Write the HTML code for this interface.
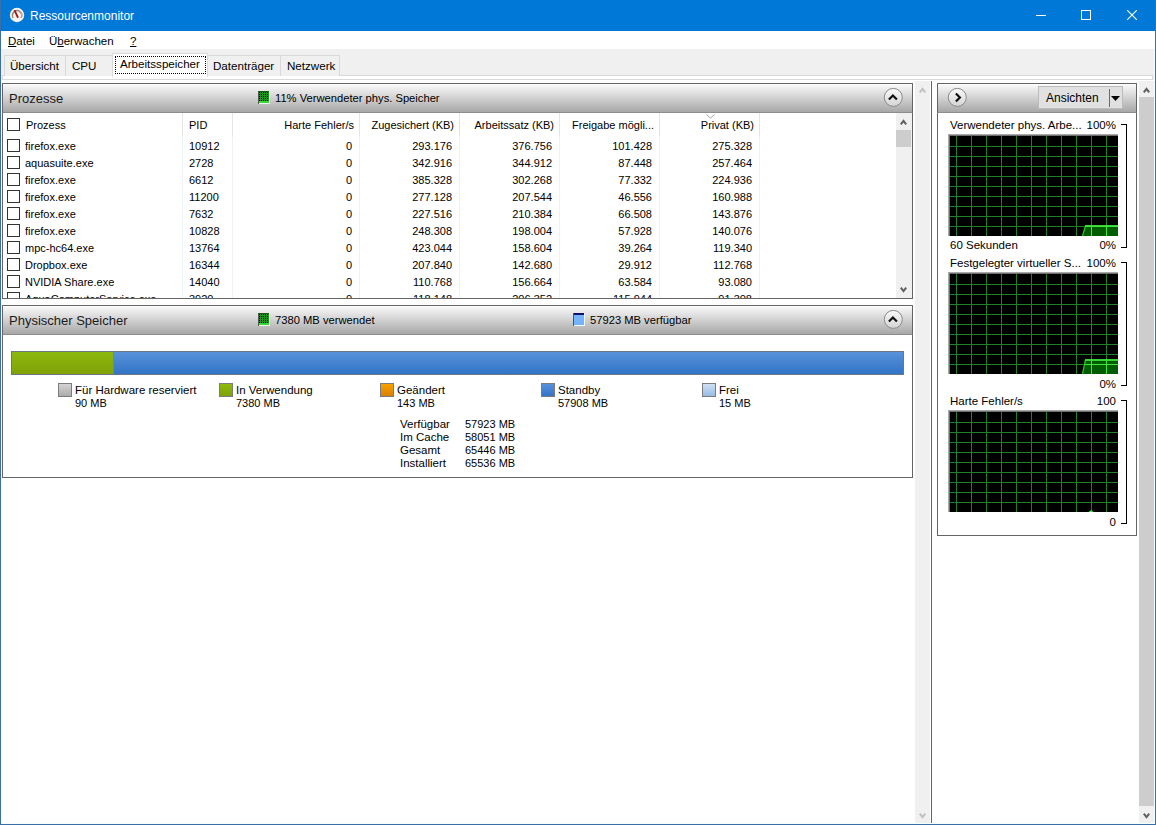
<!DOCTYPE html>
<html><head><meta charset="utf-8"><style>
*{margin:0;padding:0;box-sizing:border-box}
html,body{width:1156px;height:825px;overflow:hidden;background:#fff}
body{font-family:"Liberation Sans",sans-serif;font-size:11.5px;line-height:13px;color:#000;position:relative}
.a{position:absolute;white-space:nowrap}
.u{text-decoration:underline;text-underline-offset:1px}
.hdr{background:linear-gradient(#fff 0,#fff 1px,#f8f8f8 1px,#a7a7a7 100%)}
.cb{position:absolute;width:13px;height:13px;border:1px solid #333;background:#fff}
.gi{position:absolute;width:12px;height:13px;background:#000}
</style></head><body>
<div class="a" style="left:0px;top:0px;width:1156px;height:825px;background:#f0f0f0;border:1px solid #3a6ea6"></div>
<div class="a" style="left:0px;top:0px;width:1156px;height:31px;background:#0078d7"></div>
<svg class="a" style="left:8px;top:6px" width="18" height="18" viewBox="0 0 18 18">
<circle cx="9" cy="9" r="7.2" fill="#f6f3f0"/>
<path d="M5.2 11.8 A4.6 4.6 0 1 1 13 11.8" fill="none" stroke="#8f8a80" stroke-width="1.4"/>
<path d="M12.6 6.2 A4.6 4.6 0 0 1 13 11.8" fill="none" stroke="#d9a070" stroke-width="1.4"/>
<path d="M5.6 4.3 L7.4 3.9 L10.8 11.2 L9.2 12.2 Z" fill="#a8101a"/>
</svg>
<div class="a" style="left:30px;top:10px;font-size:12px;color:#fff">Ressourcenmonitor</div>
<svg class="a" style="left:1036px;top:15px" width="11" height="1"><rect width="10" height="1" fill="#fff"/></svg>
<svg class="a" style="left:1081px;top:10px" width="10" height="10"><rect x="0.5" y="0.5" width="9" height="9" fill="none" stroke="#fff"/></svg>
<svg class="a" style="left:1127px;top:10px" width="10" height="10"><path d="M0 0L10 10M10 0L0 10" stroke="#fff" stroke-width="1.1"/></svg>
<div class="a" style="left:1px;top:31px;width:1154px;height:18px;background:#fff"></div>
<div class="a" style="left:8px;top:35px"><span class="u">D</span>atei</div>
<div class="a" style="left:49px;top:35px">Ü<span class="u">b</span>erwachen</div>
<div class="a" style="left:130px;top:35px"><span class="u">?</span></div>
<div class="a" style="left:2px;top:75px;width:1151px;height:5px;background:#fff;border:1px solid #d9d9d9"></div>
<div class="a" style="left:4px;top:55px;width:62px;height:21px;background:#f0f0f0;border:1px solid #d9d9d9;border-bottom:none"></div>
<div class="a" style="left:10px;top:59px;font-size:11.6px">Übersicht</div>
<div class="a" style="left:65px;top:55px;width:48px;height:21px;background:#f0f0f0;border:1px solid #d9d9d9;border-bottom:none"></div>
<div class="a" style="left:72px;top:59px;font-size:11.6px">CPU</div>
<div class="a" style="left:207px;top:55px;width:74px;height:21px;background:#f0f0f0;border:1px solid #d9d9d9;border-bottom:none"></div>
<div class="a" style="left:213px;top:59px;font-size:11.6px">Datenträger</div>
<div class="a" style="left:280px;top:55px;width:60px;height:21px;background:#f0f0f0;border:1px solid #d9d9d9;border-bottom:none"></div>
<div class="a" style="left:287px;top:59px;font-size:11.6px">Netzwerk</div>
<div class="a" style="left:112px;top:53px;width:96px;height:24px;background:#fff;border:1px solid #d9d9d9;border-bottom:none"></div>
<div class="a" style="left:115px;top:56px;width:91px;height:18px;border:1px dotted #000"></div>
<div class="a" style="left:120px;top:57px;font-size:11.6px">Arbeitsspeicher</div>
<div class="a" style="left:1px;top:80px;width:1154px;height:744px;background:#fff"></div>
<div class="a" style="left:2px;top:83px;width:911px;height:30px;border:1px solid #646464;border-bottom:1px solid #8c8c8c;border-radius:1px 1px 0 0"></div>
<div class="a hdr" style="left:3px;top:84px;width:909px;height:28px"></div>
<div class="a" style="left:9px;top:92px;font-size:13px;color:#1a1a1a">Prozesse</div>
<svg class="a" style="left:258px;top:91px" width="12" height="13" viewBox="0 0 12 13">
<rect x="0" y="0" width="12" height="13" fill="#e8f8e8"/>
<rect x="0" y="0" width="11" height="12" fill="#169a16"/>
<rect x="1" y="1" width="1" height="1" fill="#000"/><rect x="1" y="3" width="1" height="1" fill="#000"/><rect x="1" y="5" width="1" height="1" fill="#000"/><rect x="1" y="7" width="1" height="1" fill="#000"/><rect x="1" y="9" width="1" height="1" fill="#000"/><rect x="3" y="1" width="1" height="1" fill="#000"/><rect x="3" y="3" width="1" height="1" fill="#000"/><rect x="3" y="5" width="1" height="1" fill="#000"/><rect x="3" y="7" width="1" height="1" fill="#000"/><rect x="3" y="9" width="1" height="1" fill="#000"/><rect x="5" y="1" width="1" height="1" fill="#000"/><rect x="5" y="3" width="1" height="1" fill="#000"/><rect x="5" y="5" width="1" height="1" fill="#000"/><rect x="5" y="7" width="1" height="1" fill="#000"/><rect x="5" y="9" width="1" height="1" fill="#000"/><rect x="7" y="1" width="1" height="1" fill="#000"/><rect x="7" y="3" width="1" height="1" fill="#000"/><rect x="7" y="5" width="1" height="1" fill="#000"/><rect x="7" y="7" width="1" height="1" fill="#000"/><rect x="7" y="9" width="1" height="1" fill="#000"/><rect x="9" y="1" width="1" height="1" fill="#000"/><rect x="9" y="3" width="1" height="1" fill="#000"/><rect x="9" y="5" width="1" height="1" fill="#000"/><rect x="9" y="7" width="1" height="1" fill="#000"/><rect x="9" y="9" width="1" height="1" fill="#000"/>
<rect x="1" y="10" width="10" height="2" fill="#3ad83a"/>
<rect x="0" y="0" width="1" height="13" fill="#555"/>
<rect x="0" y="0" width="11" height="1" fill="#1a5a1a"/>
</svg>
<div class="a" style="left:275px;top:92px;font-size:11.2px">11% Verwendeter phys. Speicher</div>
<svg class="a" style="left:883px;top:87px" width="20" height="20" viewBox="0 0 20 20">
<defs><linearGradient id="g89397" x1="0" y1="0" x2="0" y2="1"><stop offset="0" stop-color="#fafafa"/><stop offset="1" stop-color="#d4d4d4"/></linearGradient></defs>
<circle cx="10.3" cy="10.4" r="9" fill="url(#g89397)" stroke="#8a8a8a" stroke-width="1"/>
<g transform="translate(0.4,0.5)"><path d="M5.5 12 L9.5 8 L13.5 12" stroke="#111" stroke-width="2.2" fill="none"/></g>
</svg>
<div class="a" style="left:2px;top:113px;width:911px;height:186px;background:#fff;border:1px solid #646464;border-top:none"></div>
<div class="a" style="left:182px;top:113px;width:1px;height:24px;background:#e5e5e5"></div>
<div class="a" style="left:182px;top:137px;width:1px;height:161px;background:#eef1f5"></div>
<div class="a" style="left:232px;top:113px;width:1px;height:24px;background:#e5e5e5"></div>
<div class="a" style="left:232px;top:137px;width:1px;height:161px;background:#eef1f5"></div>
<div class="a" style="left:359px;top:113px;width:1px;height:24px;background:#e5e5e5"></div>
<div class="a" style="left:359px;top:137px;width:1px;height:161px;background:#eef1f5"></div>
<div class="a" style="left:459px;top:113px;width:1px;height:24px;background:#e5e5e5"></div>
<div class="a" style="left:459px;top:137px;width:1px;height:161px;background:#eef1f5"></div>
<div class="a" style="left:559px;top:113px;width:1px;height:24px;background:#e5e5e5"></div>
<div class="a" style="left:559px;top:137px;width:1px;height:161px;background:#eef1f5"></div>
<div class="a" style="left:659px;top:113px;width:1px;height:24px;background:#e5e5e5"></div>
<div class="a" style="left:659px;top:137px;width:1px;height:161px;background:#eef1f5"></div>
<div class="a" style="left:759px;top:113px;width:1px;height:24px;background:#e5e5e5"></div>
<div class="a" style="left:759px;top:137px;width:1px;height:161px;background:#eef1f5"></div>
<div class="cb" style="left:7px;top:118px"></div>
<div class="a" style="left:26px;top:119px;font-size:11px">Prozess</div>
<div class="a" style="left:189px;top:119px;font-size:11px">PID</div>
<div class="a" style="left:154px;width:200px;top:119px;text-align:right;font-size:11px">Harte Fehler/s</div>
<div class="a" style="left:254px;width:200px;top:119px;text-align:right;font-size:11px">Zugesichert (KB)</div>
<div class="a" style="left:354px;width:200px;top:119px;text-align:right;font-size:11px">Arbeitssatz (KB)</div>
<div class="a" style="left:454px;width:200px;top:119px;text-align:right;font-size:11px">Freigabe mögli...</div>
<div class="a" style="left:554px;width:200px;top:119px;text-align:right;font-size:11px">Privat (KB)</div>
<svg class="a" style="left:706px;top:114px" width="9" height="5"><path d="M0.5 0.5L4.5 4L8.5 0.5" stroke="#a0a0a0" fill="none"/></svg>
<div class="a" style="left:3px;top:113px;width:893px;height:185px;overflow:hidden;font-size:11px">
<div class="cb" style="left:4px;top:26px"></div>
<div class="a" style="left:22px;top:27px">firefox.exe</div>
<div class="a" style="left:186px;top:27px">10912</div>
<div class="a" style="left:149px;width:200px;text-align:right;top:27px">0</div>
<div class="a" style="left:249px;width:200px;text-align:right;top:27px">293.176</div>
<div class="a" style="left:349px;width:200px;text-align:right;top:27px">376.756</div>
<div class="a" style="left:449px;width:200px;text-align:right;top:27px">101.428</div>
<div class="a" style="left:549px;width:200px;text-align:right;top:27px">275.328</div>
<div class="cb" style="left:4px;top:43px"></div>
<div class="a" style="left:22px;top:44px">aquasuite.exe</div>
<div class="a" style="left:186px;top:44px">2728</div>
<div class="a" style="left:149px;width:200px;text-align:right;top:44px">0</div>
<div class="a" style="left:249px;width:200px;text-align:right;top:44px">342.916</div>
<div class="a" style="left:349px;width:200px;text-align:right;top:44px">344.912</div>
<div class="a" style="left:449px;width:200px;text-align:right;top:44px">87.448</div>
<div class="a" style="left:549px;width:200px;text-align:right;top:44px">257.464</div>
<div class="cb" style="left:4px;top:60px"></div>
<div class="a" style="left:22px;top:61px">firefox.exe</div>
<div class="a" style="left:186px;top:61px">6612</div>
<div class="a" style="left:149px;width:200px;text-align:right;top:61px">0</div>
<div class="a" style="left:249px;width:200px;text-align:right;top:61px">385.328</div>
<div class="a" style="left:349px;width:200px;text-align:right;top:61px">302.268</div>
<div class="a" style="left:449px;width:200px;text-align:right;top:61px">77.332</div>
<div class="a" style="left:549px;width:200px;text-align:right;top:61px">224.936</div>
<div class="cb" style="left:4px;top:77px"></div>
<div class="a" style="left:22px;top:78px">firefox.exe</div>
<div class="a" style="left:186px;top:78px">11200</div>
<div class="a" style="left:149px;width:200px;text-align:right;top:78px">0</div>
<div class="a" style="left:249px;width:200px;text-align:right;top:78px">277.128</div>
<div class="a" style="left:349px;width:200px;text-align:right;top:78px">207.544</div>
<div class="a" style="left:449px;width:200px;text-align:right;top:78px">46.556</div>
<div class="a" style="left:549px;width:200px;text-align:right;top:78px">160.988</div>
<div class="cb" style="left:4px;top:94px"></div>
<div class="a" style="left:22px;top:95px">firefox.exe</div>
<div class="a" style="left:186px;top:95px">7632</div>
<div class="a" style="left:149px;width:200px;text-align:right;top:95px">0</div>
<div class="a" style="left:249px;width:200px;text-align:right;top:95px">227.516</div>
<div class="a" style="left:349px;width:200px;text-align:right;top:95px">210.384</div>
<div class="a" style="left:449px;width:200px;text-align:right;top:95px">66.508</div>
<div class="a" style="left:549px;width:200px;text-align:right;top:95px">143.876</div>
<div class="cb" style="left:4px;top:111px"></div>
<div class="a" style="left:22px;top:112px">firefox.exe</div>
<div class="a" style="left:186px;top:112px">10828</div>
<div class="a" style="left:149px;width:200px;text-align:right;top:112px">0</div>
<div class="a" style="left:249px;width:200px;text-align:right;top:112px">248.308</div>
<div class="a" style="left:349px;width:200px;text-align:right;top:112px">198.004</div>
<div class="a" style="left:449px;width:200px;text-align:right;top:112px">57.928</div>
<div class="a" style="left:549px;width:200px;text-align:right;top:112px">140.076</div>
<div class="cb" style="left:4px;top:128px"></div>
<div class="a" style="left:22px;top:129px">mpc-hc64.exe</div>
<div class="a" style="left:186px;top:129px">13764</div>
<div class="a" style="left:149px;width:200px;text-align:right;top:129px">0</div>
<div class="a" style="left:249px;width:200px;text-align:right;top:129px">423.044</div>
<div class="a" style="left:349px;width:200px;text-align:right;top:129px">158.604</div>
<div class="a" style="left:449px;width:200px;text-align:right;top:129px">39.264</div>
<div class="a" style="left:549px;width:200px;text-align:right;top:129px">119.340</div>
<div class="cb" style="left:4px;top:145px"></div>
<div class="a" style="left:22px;top:146px">Dropbox.exe</div>
<div class="a" style="left:186px;top:146px">16344</div>
<div class="a" style="left:149px;width:200px;text-align:right;top:146px">0</div>
<div class="a" style="left:249px;width:200px;text-align:right;top:146px">207.840</div>
<div class="a" style="left:349px;width:200px;text-align:right;top:146px">142.680</div>
<div class="a" style="left:449px;width:200px;text-align:right;top:146px">29.912</div>
<div class="a" style="left:549px;width:200px;text-align:right;top:146px">112.768</div>
<div class="cb" style="left:4px;top:162px"></div>
<div class="a" style="left:22px;top:163px">NVIDIA Share.exe</div>
<div class="a" style="left:186px;top:163px">14040</div>
<div class="a" style="left:149px;width:200px;text-align:right;top:163px">0</div>
<div class="a" style="left:249px;width:200px;text-align:right;top:163px">110.768</div>
<div class="a" style="left:349px;width:200px;text-align:right;top:163px">156.664</div>
<div class="a" style="left:449px;width:200px;text-align:right;top:163px">63.584</div>
<div class="a" style="left:549px;width:200px;text-align:right;top:163px">93.080</div>
<div class="cb" style="left:4px;top:179px"></div>
<div class="a" style="left:22px;top:180px">AquaComputerService.exe</div>
<div class="a" style="left:186px;top:180px">3920</div>
<div class="a" style="left:149px;width:200px;text-align:right;top:180px">0</div>
<div class="a" style="left:249px;width:200px;text-align:right;top:180px">118.148</div>
<div class="a" style="left:349px;width:200px;text-align:right;top:180px">206.352</div>
<div class="a" style="left:449px;width:200px;text-align:right;top:180px">115.944</div>
<div class="a" style="left:549px;width:200px;text-align:right;top:180px">91.308</div>
</div>
<div class="a" style="left:896px;top:113px;width:16px;height:185px;background:#f0f0f0"></div>
<div class="a" style="left:896px;top:130px;width:15px;height:17px;background:#cdcdcd"></div>
<svg class="a" style="left:900px;top:119px" width="7" height="6"><path d="M0.8 5.4L3.5 1.8L6.2 5.4" stroke="#606060" stroke-width="2" fill="none" stroke-linejoin="miter" stroke-miterlimit="10"/></svg>
<svg class="a" style="left:900px;top:287px" width="7" height="6"><path d="M0.8 0.6L3.5 4.2L6.2 0.6" stroke="#606060" stroke-width="2" fill="none" stroke-linejoin="miter" stroke-miterlimit="10"/></svg>
<div class="a" style="left:2px;top:305px;width:911px;height:30px;border:1px solid #646464;border-bottom:1px solid #8c8c8c;border-radius:1px 1px 0 0"></div>
<div class="a hdr" style="left:3px;top:306px;width:909px;height:28px"></div>
<div class="a" style="left:9px;top:314px;font-size:13px;color:#1a1a1a">Physischer Speicher</div>
<svg class="a" style="left:258px;top:313px" width="12" height="13" viewBox="0 0 12 13">
<rect x="0" y="0" width="12" height="13" fill="#e8f8e8"/>
<rect x="0" y="0" width="11" height="12" fill="#169a16"/>
<rect x="1" y="1" width="1" height="1" fill="#000"/><rect x="1" y="3" width="1" height="1" fill="#000"/><rect x="1" y="5" width="1" height="1" fill="#000"/><rect x="1" y="7" width="1" height="1" fill="#000"/><rect x="1" y="9" width="1" height="1" fill="#000"/><rect x="3" y="1" width="1" height="1" fill="#000"/><rect x="3" y="3" width="1" height="1" fill="#000"/><rect x="3" y="5" width="1" height="1" fill="#000"/><rect x="3" y="7" width="1" height="1" fill="#000"/><rect x="3" y="9" width="1" height="1" fill="#000"/><rect x="5" y="1" width="1" height="1" fill="#000"/><rect x="5" y="3" width="1" height="1" fill="#000"/><rect x="5" y="5" width="1" height="1" fill="#000"/><rect x="5" y="7" width="1" height="1" fill="#000"/><rect x="5" y="9" width="1" height="1" fill="#000"/><rect x="7" y="1" width="1" height="1" fill="#000"/><rect x="7" y="3" width="1" height="1" fill="#000"/><rect x="7" y="5" width="1" height="1" fill="#000"/><rect x="7" y="7" width="1" height="1" fill="#000"/><rect x="7" y="9" width="1" height="1" fill="#000"/><rect x="9" y="1" width="1" height="1" fill="#000"/><rect x="9" y="3" width="1" height="1" fill="#000"/><rect x="9" y="5" width="1" height="1" fill="#000"/><rect x="9" y="7" width="1" height="1" fill="#000"/><rect x="9" y="9" width="1" height="1" fill="#000"/>
<rect x="1" y="10" width="10" height="2" fill="#3ad83a"/>
<rect x="0" y="0" width="1" height="13" fill="#555"/>
<rect x="0" y="0" width="11" height="1" fill="#1a5a1a"/>
</svg>
<div class="a" style="left:275px;top:314px;font-size:11.2px">7380 MB verwendet</div>
<svg class="a" style="left:573px;top:313px" width="12" height="13" viewBox="0 0 12 13">
<rect x="0" y="0" width="12" height="13" fill="#f4f8ff"/>
<rect x="0" y="0" width="11" height="12" fill="#74b4fc"/>
<rect x="0" y="0" width="11" height="2" fill="#10106a"/>
<rect x="0" y="0" width="1" height="13" fill="#555"/>
</svg>
<div class="a" style="left:590px;top:314px;font-size:11.2px">57923 MB verfügbar</div>
<svg class="a" style="left:883px;top:309px" width="20" height="20" viewBox="0 0 20 20">
<defs><linearGradient id="g893319" x1="0" y1="0" x2="0" y2="1"><stop offset="0" stop-color="#fafafa"/><stop offset="1" stop-color="#d4d4d4"/></linearGradient></defs>
<circle cx="10.3" cy="10.4" r="9" fill="url(#g893319)" stroke="#8a8a8a" stroke-width="1"/>
<g transform="translate(0.4,0.5)"><path d="M5.5 12 L9.5 8 L13.5 12" stroke="#111" stroke-width="2.2" fill="none"/></g>
</svg>
<div class="a" style="left:2px;top:335px;width:911px;height:143px;background:#fff;border:1px solid #646464;border-top:none"></div>
<div class="a" style="left:11px;top:351px;width:893px;height:24px;background:linear-gradient(#5892da,#3274c6);border:1px solid #6c7684"></div>
<div class="a" style="left:12px;top:352px;width:101px;height:22px;background:linear-gradient(#8cb80c,#7fa208)"></div>
<div class="a" style="left:113px;top:352px;width:1px;height:22px;background:#b07830"></div>
<div class="a" style="left:58px;top:383px;width:14px;height:14px;background:linear-gradient(#d4d4d4,#ababab);border:1px solid #7c7c7c"></div>
<div class="a" style="left:75px;top:384px">Für Hardware reserviert</div>
<div class="a" style="left:75px;top:397px;font-size:11px">90 MB</div>
<div class="a" style="left:219px;top:383px;width:14px;height:14px;background:linear-gradient(#8eba0a,#7ea208);border:1px solid #7c7c7c"></div>
<div class="a" style="left:236px;top:384px">In Verwendung</div>
<div class="a" style="left:236px;top:397px;font-size:11px">7380 MB</div>
<div class="a" style="left:380px;top:383px;width:14px;height:14px;background:linear-gradient(#faa200,#d88000);border:1px solid #7c7c7c"></div>
<div class="a" style="left:397px;top:384px">Geändert</div>
<div class="a" style="left:397px;top:397px;font-size:11px">143 MB</div>
<div class="a" style="left:541px;top:383px;width:14px;height:14px;background:linear-gradient(#5892da,#3374c8);border:1px solid #7c7c7c"></div>
<div class="a" style="left:558px;top:384px">Standby</div>
<div class="a" style="left:558px;top:397px;font-size:11px">57908 MB</div>
<div class="a" style="left:702px;top:383px;width:14px;height:14px;background:linear-gradient(#cfe0f2,#98bce6);border:1px solid #7c7c7c"></div>
<div class="a" style="left:719px;top:384px">Frei</div>
<div class="a" style="left:719px;top:397px;font-size:11px">15 MB</div>
<div class="a" style="left:400px;top:418px">Verfügbar</div>
<div class="a" style="left:465px;top:418px;font-size:11px">57923 MB</div>
<div class="a" style="left:400px;top:431px">Im Cache</div>
<div class="a" style="left:465px;top:431px;font-size:11px">58051 MB</div>
<div class="a" style="left:400px;top:444px">Gesamt</div>
<div class="a" style="left:465px;top:444px;font-size:11px">65446 MB</div>
<div class="a" style="left:400px;top:457px">Installiert</div>
<div class="a" style="left:465px;top:457px;font-size:11px">65536 MB</div>
<div class="a" style="left:915px;top:81px;width:15px;height:743px;background:#f0f0f0"></div>
<svg class="a" style="left:919px;top:87px" width="7" height="6"><path d="M0.8 5.4L3.5 1.8L6.2 5.4" stroke="#c0c0c0" stroke-width="2" fill="none" stroke-linejoin="miter" stroke-miterlimit="10"/></svg>
<svg class="a" style="left:919px;top:813px" width="7" height="6"><path d="M0.8 0.6L3.5 4.2L6.2 0.6" stroke="#c0c0c0" stroke-width="2" fill="none" stroke-linejoin="miter" stroke-miterlimit="10"/></svg>
<div class="a" style="left:931px;top:81px;width:1px;height:743px;background:#646464"></div>
<div class="a" style="left:937px;top:83px;width:200px;height:30px;border:1px solid #646464;border-bottom:1px solid #8c8c8c;border-radius:1px 1px 0 0"></div>
<div class="a hdr" style="left:938px;top:84px;width:198px;height:28px"></div>
<div class="a" style="left:937px;top:113px;width:200px;height:423px;background:#fff;border:1px solid #646464;border-top:none"></div>
<svg class="a" style="left:947px;top:87px" width="20" height="20" viewBox="0 0 20 20">
<defs><linearGradient id="g95797" x1="0" y1="0" x2="0" y2="1"><stop offset="0" stop-color="#fafafa"/><stop offset="1" stop-color="#d4d4d4"/></linearGradient></defs>
<circle cx="10.3" cy="10.4" r="9" fill="url(#g95797)" stroke="#8a8a8a" stroke-width="1"/>
<g transform="translate(0.4,0.5)"><path d="M8.5 6 L12.5 10 L8.5 14" stroke="#111" stroke-width="2.2" fill="none"/></g>
</svg>
<div class="a" style="left:1038px;top:86px;width:85px;height:23px;background:#e1e1e1;border:1px solid #bcbcbc"></div>
<div class="a" style="left:1046px;top:92px;font-size:12px">Ansichten</div>
<div class="a" style="left:1109px;top:89px;width:1px;height:18px;background:#6a6a6a"></div>
<svg class="a" style="left:1111px;top:96px" width="9" height="5"><path d="M0 0H9L4.5 5Z" fill="#000"/></svg>
<div class="a" style="left:950px;top:119px">Verwendeter phys. Arbe...</div>
<div class="a" style="left:916px;width:200px;top:119px;text-align:right">100%</div>
<div class="a" style="left:948px;top:134px;width:170px;height:102px;background:#000;box-shadow:inset 1px 1px 0 #a8a8a8,inset 2px 2px 0 #707070"><svg width="169" height="101" style="display:block;margin:1px 0 0 1px"><rect x="7" y="1" width="1" height="100" fill="#21802a"/><rect x="22" y="1" width="1" height="100" fill="#21802a"/><rect x="37" y="1" width="1" height="100" fill="#21802a"/><rect x="52" y="1" width="1" height="100" fill="#21802a"/><rect x="67" y="1" width="1" height="100" fill="#21802a"/><rect x="82" y="1" width="1" height="100" fill="#21802a"/><rect x="97" y="1" width="1" height="100" fill="#21802a"/><rect x="112" y="1" width="1" height="100" fill="#21802a"/><rect x="127" y="1" width="1" height="100" fill="#21802a"/><rect x="142" y="1" width="1" height="100" fill="#21802a"/><rect x="157" y="1" width="1" height="100" fill="#21802a"/><rect x="1" y="11" width="168" height="1" fill="#21802a"/><rect x="1" y="21" width="168" height="1" fill="#21802a"/><rect x="1" y="31" width="168" height="1" fill="#21802a"/><rect x="1" y="41" width="168" height="1" fill="#21802a"/><rect x="1" y="51" width="168" height="1" fill="#21802a"/><rect x="1" y="61" width="168" height="1" fill="#21802a"/><rect x="1" y="71" width="168" height="1" fill="#21802a"/><rect x="1" y="81" width="168" height="1" fill="#21802a"/><rect x="1" y="91" width="168" height="1" fill="#21802a"/><path d="M133 101 L136 90 L169 90 L169 101 Z" fill="#005c00"/><rect x="142" y="90" width="1" height="11" fill="#3ee83e"/><rect x="157" y="90" width="1" height="11" fill="#3ee83e"/><rect x="136" y="91" width="33" height="1" fill="#3ee83e"/><path d="M133.5 101 L136.5 91" stroke="#2cc02c" stroke-width="1.2" fill="none"/><rect x="136" y="90" width="33" height="2" fill="#3ee83e" opacity="0.85"/></svg></div>
<div class="a" style="left:950px;top:239px">60 Sekunden</div>
<div class="a" style="left:916px;width:200px;top:239px;text-align:right">0%</div>
<div class="a" style="left:1121px;top:124px;width:6px;height:124px;border:1px solid #000;border-left:none"></div>
<div class="a" style="left:950px;top:257px">Festgelegter virtueller S...</div>
<div class="a" style="left:916px;width:200px;top:257px;text-align:right">100%</div>
<div class="a" style="left:948px;top:272px;width:170px;height:102px;background:#000;box-shadow:inset 1px 1px 0 #a8a8a8,inset 2px 2px 0 #707070"><svg width="169" height="101" style="display:block;margin:1px 0 0 1px"><rect x="7" y="1" width="1" height="100" fill="#21802a"/><rect x="22" y="1" width="1" height="100" fill="#21802a"/><rect x="37" y="1" width="1" height="100" fill="#21802a"/><rect x="52" y="1" width="1" height="100" fill="#21802a"/><rect x="67" y="1" width="1" height="100" fill="#21802a"/><rect x="82" y="1" width="1" height="100" fill="#21802a"/><rect x="97" y="1" width="1" height="100" fill="#21802a"/><rect x="112" y="1" width="1" height="100" fill="#21802a"/><rect x="127" y="1" width="1" height="100" fill="#21802a"/><rect x="142" y="1" width="1" height="100" fill="#21802a"/><rect x="157" y="1" width="1" height="100" fill="#21802a"/><rect x="1" y="11" width="168" height="1" fill="#21802a"/><rect x="1" y="21" width="168" height="1" fill="#21802a"/><rect x="1" y="31" width="168" height="1" fill="#21802a"/><rect x="1" y="41" width="168" height="1" fill="#21802a"/><rect x="1" y="51" width="168" height="1" fill="#21802a"/><rect x="1" y="61" width="168" height="1" fill="#21802a"/><rect x="1" y="71" width="168" height="1" fill="#21802a"/><rect x="1" y="81" width="168" height="1" fill="#21802a"/><rect x="1" y="91" width="168" height="1" fill="#21802a"/><path d="M133 101 L136 86 L169 86 L169 101 Z" fill="#005c00"/><rect x="142" y="86" width="1" height="15" fill="#3ee83e"/><rect x="157" y="86" width="1" height="15" fill="#3ee83e"/><rect x="136" y="91" width="33" height="1" fill="#3ee83e"/><path d="M133.5 101 L136.5 87" stroke="#2cc02c" stroke-width="1.2" fill="none"/><rect x="136" y="86" width="33" height="2" fill="#3ee83e" opacity="0.85"/></svg></div>
<div class="a" style="left:916px;width:200px;top:378px;text-align:right">0%</div>
<div class="a" style="left:1121px;top:262px;width:6px;height:124px;border:1px solid #000;border-left:none"></div>
<div class="a" style="left:950px;top:395px">Harte Fehler/s</div>
<div class="a" style="left:916px;width:200px;top:395px;text-align:right">100</div>
<div class="a" style="left:948px;top:410px;width:170px;height:102px;background:#000;box-shadow:inset 1px 1px 0 #a8a8a8,inset 2px 2px 0 #707070"><svg width="169" height="101" style="display:block;margin:1px 0 0 1px"><rect x="7" y="1" width="1" height="100" fill="#21802a"/><rect x="22" y="1" width="1" height="100" fill="#21802a"/><rect x="37" y="1" width="1" height="100" fill="#21802a"/><rect x="52" y="1" width="1" height="100" fill="#21802a"/><rect x="67" y="1" width="1" height="100" fill="#21802a"/><rect x="82" y="1" width="1" height="100" fill="#21802a"/><rect x="97" y="1" width="1" height="100" fill="#21802a"/><rect x="112" y="1" width="1" height="100" fill="#21802a"/><rect x="127" y="1" width="1" height="100" fill="#21802a"/><rect x="142" y="1" width="1" height="100" fill="#21802a"/><rect x="157" y="1" width="1" height="100" fill="#21802a"/><rect x="1" y="11" width="168" height="1" fill="#21802a"/><rect x="1" y="21" width="168" height="1" fill="#21802a"/><rect x="1" y="31" width="168" height="1" fill="#21802a"/><rect x="1" y="41" width="168" height="1" fill="#21802a"/><rect x="1" y="51" width="168" height="1" fill="#21802a"/><rect x="1" y="61" width="168" height="1" fill="#21802a"/><rect x="1" y="71" width="168" height="1" fill="#21802a"/><rect x="1" y="81" width="168" height="1" fill="#21802a"/><rect x="1" y="91" width="168" height="1" fill="#21802a"/><path d="M139.5 101 L142 99 L144.5 101Z" fill="#3ee83e"/></svg></div>
<div class="a" style="left:916px;width:200px;top:516px;text-align:right">0</div>
<div class="a" style="left:1121px;top:400px;width:6px;height:124px;border:1px solid #000;border-left:none"></div>
<div class="a" style="left:1139px;top:81px;width:15px;height:742px;background:#f0f0f0"></div>
<div class="a" style="left:1139px;top:97px;width:15px;height:709px;background:#cdcdcd"></div>
<svg class="a" style="left:1143px;top:87px" width="7" height="6"><path d="M0.8 5.4L3.5 1.8L6.2 5.4" stroke="#606060" stroke-width="2" fill="none" stroke-linejoin="miter" stroke-miterlimit="10"/></svg>
<svg class="a" style="left:1143px;top:813px" width="7" height="6"><path d="M0.8 0.6L3.5 4.2L6.2 0.6" stroke="#606060" stroke-width="2" fill="none" stroke-linejoin="miter" stroke-miterlimit="10"/></svg>
<div class="a" style="left:1154px;top:49px;width:1px;height:775px;background:#f6fdff"></div>
<div class="a" style="left:1px;top:823px;width:1154px;height:1px;background:#f6fdff"></div>
<div class="a" style="left:0px;top:0px;width:1156px;height:825px;border:1px solid #3a6ea6;border-top:none;pointer-events:none"></div>
</body></html>
